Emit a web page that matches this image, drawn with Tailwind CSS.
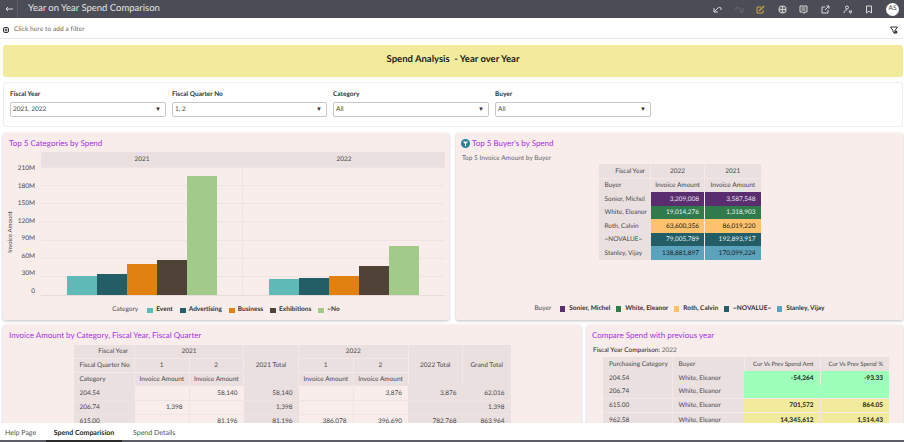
<!DOCTYPE html>
<html lang="en">
<head>
<meta charset="UTF-8">
<title>Year on Year Spend Comparison</title>
<script src="https://cdn.jsdelivr.net/npm/@tailwindcss/browser@4"></script>
</head>
<body class="bg-white font-['Lato','Liberation_Sans',sans-serif] text-[#4a4a4a] [text-rendering:geometricPrecision]">
<div class="flex h-[442px] w-[904px] flex-col overflow-hidden">

  <!-- Top bar -->
  <header class="flex h-[18px] shrink-0 items-center bg-[#4a4d55] text-white">
    <div class="flex h-full w-[18px] items-center justify-center border-r border-[#5d6068]">
      <svg width="8" height="6" viewBox="0 0 8 6" fill="none" stroke="#d8d8d8" stroke-width="1"><path d="M8 3H1M3 1 1 3l2 2"/></svg>
    </div>
    <div class="ml-[10px] text-[9.500px] text-[#e4e4e4]">Year on Year Spend Comparison</div>
    <div class="ml-auto flex items-center text-[#d9d9d9]">
      <div class="flex w-[22px] justify-center"><svg width="9" height="8" viewBox="0 0 9 8" fill="none" stroke="currentColor"><path d="M1 3v4h4M1 7l4-4c1-1 2-1 3 0v2"/></svg></div>
      <div class="flex w-[22px] justify-center"><svg width="9" height="8" viewBox="0 0 9 8" fill="none" stroke="#666a72"><path d="M8 3v4H4M8 7 4 3C3 2 2 2 1 3v2"/></svg></div>
      <div class="flex w-[21px] justify-center"><svg width="9" height="9" viewBox="0 0 9 9" fill="none" stroke="#c9a545"><path d="M7 5v3H1V2h4"/><path d="M3 6l5-5" stroke-width="1.4"/></svg></div>
      <div class="flex w-[22px] justify-center"><svg width="9" height="9" viewBox="0 0 9 9"><circle cx="4.5" cy="4.5" r="4" fill="#c4c4c4"/><circle cx="3" cy="3" r="1" fill="#4a4d55"/><circle cx="6" cy="3" r="1" fill="#4a4d55"/><circle cx="3" cy="6" r="1" fill="#4a4d55"/><circle cx="6" cy="6" r="1" fill="#4a4d55"/></svg></div>
      <div class="flex w-[21px] justify-center"><svg width="9" height="9" viewBox="0 0 9 9" fill="none" stroke="currentColor"><path d="M1 1h7v6H5v1.500L3.500 7H1zM2.500 3h4M2.500 5h4"/></svg></div>
      <div class="flex w-[22px] justify-center"><svg width="9" height="9" viewBox="0 0 9 9" fill="none" stroke="currentColor"><path d="M4 2H1v6h6V5M4 5l4-4M5.500 1H8v2.500"/></svg></div>
      <div class="flex w-[22px] justify-center"><svg width="9" height="9" viewBox="0 0 9 9" fill="none" stroke="currentColor"><circle cx="4" cy="2.500" r="1.500"/><path d="M1 8c0-2 1-3 3-3M6 6h3l-1.500 2.500z"/></svg></div>
      <div class="flex w-[22px] justify-center"><svg width="8" height="9" viewBox="0 0 8 9" fill="none" stroke="currentColor"><path d="M1.500 1h5v7L4 6 1.500 8z"/></svg></div>
      <div class="ml-[6px] mr-[5px] flex h-[13px] w-[13px] items-center justify-center rounded-full bg-white text-[6.500px] text-[#444]">AS</div>
    </div>
  </header>

  <!-- Filter bar -->
  <div class="flex h-[21px] shrink-0 items-center border-b border-[#e6e6e6] pl-[3px] pr-[6px] pt-[4px] text-[6.500px] text-[#666]">
    <svg width="6" height="6" viewBox="0 0 6 6" fill="none" stroke="#333"><rect x="0.500" y="0.500" width="5" height="5" rx="1.500"/><path d="M3 1.500v3M1.500 3h3"/></svg>
    <span class="ml-[5px] tracking-[0.1px]">Click here to add a filter</span>
    <svg class="ml-auto" width="8" height="8" viewBox="0 0 8 8" fill="none" stroke="#333"><path d="M0.500 1h7L5 4.500v3L3 6V4.500z"/><circle cx="6" cy="6" r="1.500" fill="#333" stroke="none"/></svg>
  </div>

  <!-- Dashboard canvas -->
  <main class="min-h-0 flex-1 overflow-hidden pl-[3px] pr-px pt-[6px]">
    <div class="flex h-[32px] items-center justify-center rounded-[3px] bg-[#f3eb9c] pb-[2px] text-[9.500px] font-bold text-[#1c1c1c]">Spend Analysis&nbsp; - Year over Year</div>

    <!-- Prompts -->
    <section class="mt-[5px] flex h-[45px] gap-[6px] rounded-[3px] border border-[#eeeeee] pl-[6px] pt-[5px]">
      <div class="w-[156px]">
        <div class="text-[6.500px] font-bold leading-[14px] text-[#333]">Fiscal Year</div>
        <div class="flex h-[15px] items-center justify-between rounded-[2px] border border-[#c8c8c8] pl-[2px] pr-[4px] text-[6.500px]">2021, 2022<span class="text-[6px] text-[#333]">▼</span></div>
      </div>
      <div class="w-[155px]">
        <div class="text-[6.500px] font-bold leading-[14px] text-[#333]">Fiscal Quarter No</div>
        <div class="flex h-[15px] items-center justify-between rounded-[2px] border border-[#c8c8c8] pl-[2px] pr-[4px] text-[6.500px]">1, 2<span class="text-[6px] text-[#333]">▼</span></div>
      </div>
      <div class="w-[156px]">
        <div class="text-[6.500px] font-bold leading-[14px] text-[#333]">Category</div>
        <div class="flex h-[15px] items-center justify-between rounded-[2px] border border-[#c8c8c8] pl-[2px] pr-[4px] text-[6.500px]">All<span class="text-[6px] text-[#333]">▼</span></div>
      </div>
      <div class="w-[156px]">
        <div class="text-[6.500px] font-bold leading-[14px] text-[#333]">Buyer</div>
        <div class="flex h-[15px] items-center justify-between rounded-[2px] border border-[#c8c8c8] pl-[2px] pr-[4px] text-[6.500px]">All<span class="text-[6px] text-[#333]">▼</span></div>
      </div>
    </section>

    <!-- Row 1 -->
    <div class="mt-[6px] flex h-[187px] gap-[7px]">
      <section class="flex w-[446px] flex-col rounded-[2px] bg-[#f8edeb] pt-[4px] shadow-[0_1px_3px_rgba(0,0,0,0.25)]">
        <h2 class="pl-[6px] text-[8px] leading-[13px] text-[#a832e0]">Top 5 Categories by Spend</h2>
        <div class="ml-[3px] mt-[2px] flex h-[144px] w-[439px]">
          <div class="relative w-[35px] shrink-0">
            <div class="absolute left-[-20px] top-[77px] w-[50px] -rotate-90 text-center text-[6px] leading-none">Invoice Amount</div>
            <div class="flex h-full flex-col items-end justify-between pl-[8px] pr-[6px] pt-[13px] text-[6.500px] leading-[8px]">
              <span>210M</span><span>180M</span><span>150M</span><span>120M</span><span>90M</span><span>60M</span><span>30M</span><span>0</span>
            </div>
          </div>
          <div class="flex-1">
            <div class="flex h-[15px] bg-[#ebe0e0] text-center text-[6.500px] leading-[15px]">
              <div class="w-[202px]">2021</div>
              <div class="flex-1">2022</div>
            </div>
            <div class="relative flex h-[129px] border-b border-[#e6dcda]">
              <!-- gridlines sit behind the bars -->
              <div class="absolute inset-0 flex flex-col justify-between pb-[18px]">
                <div class="h-px bg-[#f0e4e2]"></div><div class="h-px bg-[#f0e4e2]"></div><div class="h-px bg-[#f0e4e2]"></div><div class="h-px bg-[#f0e4e2]"></div><div class="h-px bg-[#f0e4e2]"></div><div class="h-px bg-[#f0e4e2]"></div><div class="h-px bg-[#f0e4e2]"></div>
              </div>
              <div class="relative flex w-[202px] items-end justify-center border-r border-[#f0e4e2]">
                <div class="h-[19px] w-[30px] bg-[#5fb9b7]"></div>
                <div class="h-[21px] w-[30px] bg-[#235d65]"></div>
                <div class="h-[31px] w-[30px] bg-[#e08112]"></div>
                <div class="h-[35px] w-[30px] bg-[#4f4237]"></div>
                <div class="h-[119px] w-[30px] bg-[#a2ca8b]"></div>
              </div>
              <div class="relative flex flex-1 items-end justify-center">
                <div class="h-[16px] w-[30px] bg-[#5fb9b7]"></div>
                <div class="h-[17px] w-[30px] bg-[#235d65]"></div>
                <div class="h-[19px] w-[30px] bg-[#e08112]"></div>
                <div class="h-[29px] w-[30px] bg-[#4f4237]"></div>
                <div class="h-[49px] w-[30px] bg-[#a2ca8b]"></div>
              </div>
            </div>
          </div>
        </div>
        <div class="mt-[10px] flex items-center justify-center text-[6.500px] leading-[8px]">
          <span class="mr-[9px]">Category</span>
          <span class="mr-[3px] h-[5px] w-[6px] bg-[#5fb9b7]"></span><b class="mr-[7px] text-[#333]">Event</b>
          <span class="mr-[3px] h-[5px] w-[6px] bg-[#235d65]"></span><b class="mr-[7px] text-[#333]">Advertising</b>
          <span class="mr-[3px] h-[5px] w-[6px] bg-[#e08112]"></span><b class="mr-[7px] text-[#333]">Business</b>
          <span class="mr-[3px] h-[5px] w-[6px] bg-[#4f4237]"></span><b class="mr-[7px] text-[#333]">Exhibitions</b>
          <span class="mr-[3px] h-[5px] w-[6px] bg-[#a2ca8b]"></span><b class="text-[#333]">~No</b>
        </div>
      </section>

      <section class="flex w-[447px] flex-col rounded-[2px] bg-[#f8edeb] pt-[4px] shadow-[0_1px_3px_rgba(0,0,0,0.25)]">
        <h2 class="flex items-center pl-[5px] text-[8px] leading-[13px] text-[#a832e0]">
          <svg class="mr-[2px]" width="9" height="9" viewBox="0 0 9 9"><circle cx="4.500" cy="4.500" r="4.500" fill="#2b7f96"/><path d="M2 2.500h5L5 5v2.500L4 7V5z" fill="#fff"/></svg>
          Top 5 Buyer's by Spend
        </h2>
        <div class="ml-[6px] mt-[4px] text-[6.500px] leading-[10px] text-[#666]">Top 5 Invoice Amount by Buyer</div>
        <table class="mx-auto w-[162px] table-fixed text-[6.500px] leading-none [&_td]:pt-[2px]">
          <colgroup><col class="w-[52px]"><col class="w-[54px]"><col class="w-[56px]"></colgroup>
          <tbody>
            <tr class="h-[14px] bg-[#ebe0e0]"><td class="pr-[5px] text-right">Fiscal Year</td><td class="border-l border-[#f3e8e6] text-center">2022</td><td class="border-l border-[#f3e8e6] text-center">2021</td></tr>
            <tr class="h-[14px] border-t border-[#f3e8e6] bg-[#ebe0e0]"><td class="pl-[6px]">Buyer</td><td class="border-l border-[#f3e8e6] text-center">Invoice Amount</td><td class="border-l border-[#f3e8e6] text-center">Invoice Amount</td></tr>
            <tr class="h-[13.500px]"><td class="bg-[#ebe0e0] pl-[6px]">Sonier, Michel</td><td class="bg-[#5a2e6e] pr-[5px] text-right text-[#e8e0ee]">3,209,008</td><td class="border-l border-[#f3e8e6] bg-[#5a2e6e] pr-[5px] text-right text-[#e8e0ee]">3,587,548</td></tr>
            <tr class="h-[13.500px]"><td class="bg-[#ebe0e0] pl-[6px]">White, Eleanor</td><td class="bg-[#317a4b] pr-[5px] text-right text-[#e8f2ec]">19,014,276</td><td class="border-l border-[#f3e8e6] bg-[#317a4b] pr-[5px] text-right text-[#e8f2ec]">1,318,903</td></tr>
            <tr class="h-[13.500px]"><td class="bg-[#ebe0e0] pl-[6px]">Roth, Calvin</td><td class="bg-[#fdc26b] pr-[5px] text-right text-[#222]">63,600,356</td><td class="border-l border-[#f3e8e6] bg-[#fdc26b] pr-[5px] text-right text-[#222]">86,019,220</td></tr>
            <tr class="h-[13.500px]"><td class="bg-[#ebe0e0] pl-[6px]">~NOVALUE~</td><td class="bg-[#235d65] pr-[5px] text-right text-[#e4eef0]">79,005,789</td><td class="border-l border-[#f3e8e6] bg-[#235d65] pr-[5px] text-right text-[#e4eef0]">192,893,917</td></tr>
            <tr class="h-[13.500px]"><td class="bg-[#ebe0e0] pl-[6px]">Stanley, Vijay</td><td class="bg-[#5ba3bd] pr-[5px] text-right text-[#1c1c1c]">138,881,897</td><td class="border-l border-[#f3e8e6] bg-[#5ba3bd] pr-[5px] text-right text-[#1c1c1c]">170,099,224</td></tr>
          </tbody>
        </table>
        <div class="mb-[7px] mt-auto flex items-center justify-center text-[6.500px] leading-[8px]">
          <span class="mr-[9px]">Buyer</span>
          <span class="mr-[4px] h-[6px] w-[5px] bg-[#5a2e6e]"></span><b class="mr-[6px] text-[#333]">Sonier, Michel</b>
          <span class="mr-[4px] h-[6px] w-[5px] bg-[#317a4b]"></span><b class="mr-[6px] text-[#333]">White, Eleanor</b>
          <span class="mr-[4px] h-[6px] w-[5px] bg-[#fdc26b]"></span><b class="mr-[6px] text-[#333]">Roth, Calvin</b>
          <span class="mr-[4px] h-[6px] w-[5px] bg-[#235d65]"></span><b class="mr-[6px] text-[#333]">~NOVALUE~</b>
          <span class="mr-[4px] h-[6px] w-[5px] bg-[#5ba3bd]"></span><b class="text-[#333]">Stanley, Vijay</b>
        </div>
      </section>
    </div>

    <!-- Row 2, cut off by the tab bar -->
    <div class="mt-[5px] flex h-[120px] gap-[6px]">
      <section class="w-[578px] rounded-[2px] bg-[#f8edeb] pt-[4px] shadow-[0_1px_3px_rgba(0,0,0,0.25)]">
        <h2 class="pl-[6px] text-[8px] leading-[13px] text-[#a832e0]">Invoice Amount by Category, Fiscal Year, Fiscal Quarter</h2>
        <table class="mx-auto mt-[3px] w-[437px] table-fixed text-[6.500px] leading-none [&_td]:pt-[2px]">
          <colgroup><col class="w-[61px]"><col class="w-[54.500px]"><col class="w-[54.500px]"><col class="w-[55px]"><col class="w-[54.500px]"><col class="w-[55px]"><col class="w-[54.500px]"><col class="w-[48px]"></colgroup>
          <tbody>
            <tr class="h-[13.500px] bg-[#ebe0e0]"><td class="pr-[6px] text-right">Fiscal Year</td><td colspan="2" class="border-l border-[#f3e8e6] text-center">2021</td><td rowspan="3" class="border-l border-[#f3e8e6] text-center">2021 Total</td><td colspan="2" class="border-l border-[#f3e8e6] text-center">2022</td><td rowspan="3" class="border-l border-[#f3e8e6] text-center">2022 Total</td><td rowspan="3" class="border-l border-[#f3e8e6] text-center">Grand Total</td></tr>
            <tr class="h-[14px] border-t border-[#f3e8e6] bg-[#ebe0e0]"><td class="pl-[6px]">Fiscal Quarter No</td><td class="border-l border-[#f3e8e6] text-center">1</td><td class="border-l border-[#f3e8e6] text-center">2</td><td class="border-l border-[#f3e8e6] text-center">1</td><td class="border-l border-[#f3e8e6] text-center">2</td></tr>
            <tr class="h-[13.500px] border-t border-[#f3e8e6] bg-[#ebe0e0]"><td class="pl-[6px]">Category</td><td class="border-l border-[#f3e8e6] text-center">Invoice Amount</td><td class="border-l border-[#f3e8e6] text-center">Invoice Amount</td><td class="border-l border-[#f3e8e6] text-center">Invoice Amount</td><td class="border-l border-[#f3e8e6] text-center">Invoice Amount</td></tr>
            <tr class="h-[14px] border-b border-[#efe4e2] text-right"><td class="bg-[#ebe0e0] pl-[6px] text-left">204.54</td><td class="pr-[6px]"></td><td class="border-l border-[#efe4e2] pr-[6px]">58,140</td><td class="bg-[#ebe0e0] pr-[6px]">58,140</td><td class="pr-[6px]"></td><td class="border-l border-[#efe4e2] pr-[6px]">3,876</td><td class="bg-[#ebe0e0] pr-[6px]">3,876</td><td class="bg-[#ebe0e0] pr-[6px]">62,016</td></tr>
            <tr class="h-[14px] border-b border-[#efe4e2] text-right"><td class="bg-[#ebe0e0] pl-[6px] text-left">206.74</td><td class="pr-[6px]">1,398</td><td class="border-l border-[#efe4e2] pr-[6px]"></td><td class="bg-[#ebe0e0] pr-[6px]">1,398</td><td class="pr-[6px]"></td><td class="border-l border-[#efe4e2] pr-[6px]"></td><td class="bg-[#ebe0e0] pr-[6px]"></td><td class="bg-[#ebe0e0] pr-[6px]">1,398</td></tr>
            <tr class="h-[14px] text-right"><td class="bg-[#ebe0e0] pl-[6px] text-left">615.00</td><td class="pr-[6px]"></td><td class="border-l border-[#efe4e2] pr-[6px]">81,196</td><td class="bg-[#ebe0e0] pr-[6px]">81,196</td><td class="pr-[6px]">386,078</td><td class="border-l border-[#efe4e2] pr-[6px]">396,690</td><td class="bg-[#ebe0e0] pr-[6px]">782,768</td><td class="bg-[#ebe0e0] pr-[6px]">863,964</td></tr>
          </tbody>
        </table>
      </section>

      <section class="w-[316px] rounded-[2px] bg-[#f8edeb] pt-[4px] shadow-[0_1px_3px_rgba(0,0,0,0.25)]">
        <h2 class="pl-[5px] text-[8px] leading-[13px] text-[#a832e0]">Compare Spend with previous year</h2>
        <div class="ml-[6px] mt-[4px] text-[6.500px] leading-[10px] text-[#222]">Fiscal Year Comparison: <span class="text-[#666]">2022</span></div>
        <table class="ml-[16px] mt-px w-[286px] table-fixed text-[6.500px] leading-none [&_td]:pt-[2px]">
          <colgroup><col class="w-[69px]"><col class="w-[72px]"><col class="w-[76px]"><col class="w-[69px]"></colgroup>
          <tbody>
            <tr class="h-[14px] bg-[#ebe0e0]"><td class="pl-[6px]">Purchasing Category</td><td class="border-l border-[#f3e8e6] pl-[6px]">Buyer</td><td class="border-l border-[#f3e8e6] pr-[6px] text-right text-[6px]">Cur Vs Prev Spend Amt</td><td class="border-l border-[#f3e8e6] pr-[6px] text-right text-[6px]">Cur Vs Prev Spend %</td></tr>
            <tr class="h-[14px] bg-[#ebe0e0]"><td class="pl-[6px]">204.54</td><td class="border-l border-[#f3e8e6] pl-[6px]">White, Eleanor</td><td class="bg-[#9effbb] pr-[6px] text-right font-bold text-[#222]">-54,264</td><td class="border-l border-[#f3e8e6] bg-[#9effbb] pr-[6px] text-right font-bold text-[#222]">-93.33</td></tr>
            <tr class="h-[13.500px] bg-[#ebe0e0]"><td class="pl-[6px]">206.74</td><td class="border-l border-[#f3e8e6] pl-[6px]">White, Eleanor</td><td class="bg-[#9effbb]"></td><td class="bg-[#9effbb]"></td></tr>
            <tr class="h-[14px] border-t border-[#f3e8e6] bg-[#ebe0e0]"><td class="pl-[6px]">615.00</td><td class="border-l border-[#f3e8e6] pl-[6px]">White, Eleanor</td><td class="bg-[#f3eb9c] pr-[6px] text-right font-bold text-[#222]">701,572</td><td class="border-l border-[#f3e8e6] bg-[#f3eb9c] pr-[6px] text-right font-bold text-[#222]">864.05</td></tr>
            <tr class="h-[14px] border-t border-[#f3e8e6] bg-[#ebe0e0]"><td class="pl-[6px]">962.58</td><td class="border-l border-[#f3e8e6] pl-[6px]">White, Eleanor</td><td class="bg-[#f3eb9c] pr-[6px] text-right font-bold text-[#222]">14,345,612</td><td class="border-l border-[#f3e8e6] bg-[#f3eb9c] pr-[6px] text-right font-bold text-[#222]">1,514.43</td></tr>
          </tbody>
        </table>
      </section>
    </div>
  </main>

  <!-- Page tabs -->
  <nav class="flex h-[19px] shrink-0 items-stretch border-b-2 border-[#5a5d63] bg-white pt-[3px] text-[7px] leading-[14px] text-[#555]">
    <div class="ml-[5px] w-[41px]">Help Page</div>
    <div class="mb-[-2px] w-[76px] border-b-2 border-[#2b2b2b] text-center font-bold text-[#222]">Spend Comparision</div>
    <div class="ml-[11px]">Spend Details</div>
  </nav>
</div>
</body>
</html>
